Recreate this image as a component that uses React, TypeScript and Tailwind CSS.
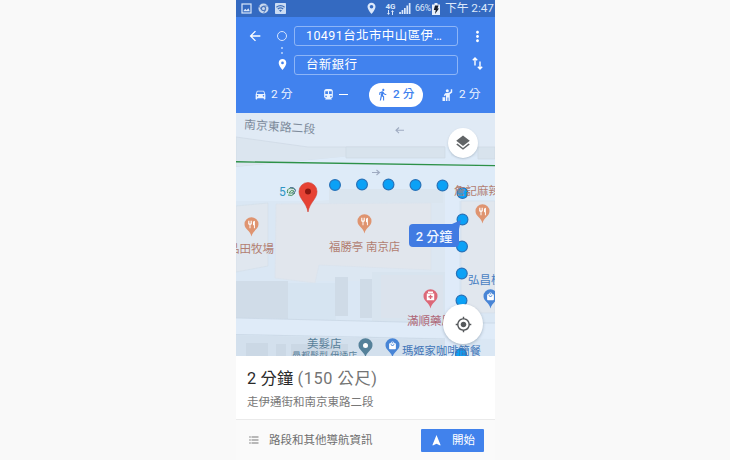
import React from "react";
import {
  MdArrowBack, MdDirectionsCar, MdDirectionsTransit, MdDirectionsWalk, MdHail, MdLayers,
  MdGpsFixed, MdNavigation, MdMoreVert, MdPlace, MdFormatListBulleted, MdRestaurant, MdLocalMall,
} from "react-icons/md";

const DOTS: [number, number][] = [
  [99, 72], [126, 71.5], [152.5, 71.5], [179.5, 72], [206.5, 72.5], [226.5, 80],
  [226.5, 106.5], [226, 133.5], [225.8, 160.5], [225.5, 187.5], [225, 214], [225, 241],
];

function StatusBar() {
  return (
    <div className="flex h-[17px] shrink-0 items-center bg-[#346ac1] pl-[5px] pr-[4px] text-[#dbe8fb]">
      <svg className="h-[11px] w-[11px]" viewBox="0 0 11 11">
        <rect x="1" y="1" width="9" height="9" fill="none" stroke="currentColor" strokeWidth="1.2" />
        <path d="M2.2 8.3l2-2.5 1.5 1.4 1.6-2 1.6 3.1z" fill="currentColor" />
      </svg>
      <svg className="ml-[6px] h-[11px] w-[11px]" viewBox="0 0 11 11">
        <circle cx="5.5" cy="5.5" r="5" fill="#c8d8ee" />
        <path d="M5.5 3H10M3.3 6.6L1.1 3M7.6 6.8L5.4 10.4" stroke="#5f86c4" strokeWidth=".9" />
        <circle cx="5.5" cy="5.5" r="2.1" fill="#c8d8ee" stroke="#4c77bd" strokeWidth="1.2" />
      </svg>
      <svg className="ml-[6px] h-[11px] w-[11px]" viewBox="0 0 11 11">
        <rect width="11" height="11" rx=".8" fill="#cbdcf3" />
        <path d="M1.4 4.2Q5.5 1 9.6 4.2M2.8 6Q5.5 3.8 8.2 6" fill="none" stroke="#3e6fb9" strokeWidth="1.2" />
        <path d="M4 7.3Q5.5 6.2 7 7.3L5.5 9z" fill="#3e6fb9" />
      </svg>
      <svg className="ml-auto h-[13px] w-[9px]" viewBox="0 0 9 13">
        <path fillRule="evenodd" fill="currentColor" d="M4.5.7A4 4 0 0 0 .5 4.8C.5 7.6 4.5 12 4.5 12S8.500 7.600 8.500 4.800A4 4 0 0 0 4.500.7zm0 2.300a1.800 1.800 0 1 1 0 3.600 1.800 1.800 0 0 1 0-3.600z" />
      </svg>
      <div className="ml-[9px] flex w-[11px] flex-col items-center">
        <span className="text-[8px] font-bold leading-[7px]">4G</span>
        <svg className="h-[5px] w-[7px]" viewBox="0 0 7 5">
          <path d="M0 3h1V0h1v3h1L1.500 5zM4 2h1v3h1V2h1L5.500 0z" fill="currentColor" />
        </svg>
      </div>
      <svg className="ml-[3px] h-[11px] w-[12px]" viewBox="0 0 12 11">
        <path d="M.2 9h1.700v2H.2zM2.600 7h1.700v4H2.600zM5 5h1.700v6H5zM7.400 2.500h1.700V11H7.400zM9.800 0h1.700v11H9.800z" fill="currentColor" />
      </svg>
      <span className="ml-[4px] w-[16px] whitespace-nowrap text-[9px] leading-none tracking-[-.3px]">66%</span>
      <svg className="ml-[1px] h-[12px] w-[8px]" viewBox="0 0 8 12">
        <path d="M2.500 0h3v1.500H8V12H0V1.500h2.500z" fill="#e8effa" />
        <path d="M3 2.500h3.500L5.500 5.500H7L3 11l.7-4H1.800z" fill="#151c29" />
      </svg>
      <span className="ml-[5px] w-[46px] whitespace-nowrap pt-px text-[11.800px] leading-none tracking-[-.05px]">下午 2:47</span>
    </div>
  );
}

function Field({ children }: { children: React.ReactNode }) {
  return (
    <div className="flex w-[164px] items-center whitespace-nowrap rounded-[3px] border border-[#8db5f7] pl-[11px] pt-px text-[12.500px] leading-none text-white">
      {children}
    </div>
  );
}

function Header() {
  return (
    <header className="flex h-[96px] shrink-0 flex-col bg-[#4182ee] text-white">
      <div className="flex h-[63px] pt-[9px]">
        <MdArrowBack className="ml-[11px] mt-[2px] h-[16px] w-[16px]" />
        <div className="ml-[13px] flex w-[12px] flex-col items-center">
          <span className="mt-[5px] h-[10px] w-[10px] shrink-0 rounded-full border border-[#d5e4fd]" />
          <span className="mt-[6px] h-[2px] w-[2px] rounded-full bg-[#bdd5fc]" />
          <span className="mt-[3px] h-[2px] w-[2px] rounded-full bg-[#bdd5fc]" />
          <MdPlace className="mt-[4px] h-[13px] w-[13px] shrink-0" />
        </div>
        <div className="ml-[6px] grid h-[49px] grid-rows-[20px_20px] gap-[9px]">
          <Field><span className="tracking-[.4px]">10491台北市中山區伊…</span></Field>
          <Field><span className="tracking-[.3px]">台新銀行</span></Field>
        </div>
        <div className="ml-[11px] flex w-[16px] flex-col items-center">
          <MdMoreVert className="mt-[2px] h-[17px] w-[17px] shrink-0" />
          <svg className="mt-[12px] h-[13px] w-[11px]" viewBox="0 0 11 13">
            <path d="M3 8.500V1M.8 3.200L3 1l2.200 2.200M8 4.500V12M5.800 9.800L8 12l2.200-2.200" fill="none" stroke="currentColor" strokeWidth="1.400" />
          </svg>
        </div>
      </div>
      <div className="flex h-[24px] items-center pl-[18px] pt-[5px] text-[11.800px] leading-none text-[#edf4ff]">
        <div className="flex w-[68px] items-center gap-[4px]">
          <MdDirectionsCar className="h-[13px] w-[13px]" /><span className="whitespace-nowrap pt-px tracking-[.15px]">2 分</span>
        </div>
        <div className="flex w-[47px] items-center gap-[4px]">
          <MdDirectionsTransit className="h-[13px] w-[13px]" /><span className="h-[1.500px] w-[9px] bg-white" />
        </div>
        <div className="flex h-[24px] w-[54px] items-center gap-[4px] rounded-full bg-white pl-[7px] text-[#4182ee]">
          <MdDirectionsWalk className="h-[13px] w-[13px]" /><span className="whitespace-nowrap pt-px font-medium">2 分</span>
        </div>
        <div className="ml-[18px] flex items-center gap-[4px]">
          <svg className="h-[14px] w-[14px]" viewBox="0 0 14 14" fill="currentColor">
            <circle cx="6.300" cy="2.800" r="1.500" />
            <path d="M4.200 5.200L8 4.800 9.800 3.600V1.200h1.400v3.200L8.800 6.200V13H7.500V9.500H6.400V13H5V7L3.800 8.300 2.800 7.300z" />
            <path d="M1.500 9.200h2.700V13H1.500z" />
          </svg>
          <span className="whitespace-nowrap pt-px tracking-[.15px]">2 分</span>
        </div>
      </div>
    </header>
  );
}

function Pin({ place, fill, children }: { place: string; fill: string; children?: React.ReactNode }) {
  return (
    <div className={"absolute flex h-[20px] w-[15px] justify-center pt-[3px] text-white " + place}>
      <svg className="absolute inset-0 h-full w-full" viewBox="0 0 15 20">
        <path d="M7.500.3A7 7 0 0 0 .5 7.300C.5 12.200 6.300 13.500 7.500 19.500 8.700 13.500 14.500 12.200 14.500 7.300A7 7 0 0 0 7.500.3z" fill={fill} />
      </svg>
      <div className="relative">{children}</div>
    </div>
  );
}

function MapView() {
  const label = "absolute whitespace-nowrap leading-none ";
  return (
    <main className="relative h-[243px] shrink-0 overflow-hidden bg-[#dae7f4]">
      <svg className="absolute inset-0 h-full w-full" viewBox="0 0 259 243">
        <path d="M0 0H259V34H72L0 24z" fill="#e0eaf5" />
        <path d="M0 24L72 34H209V44H110L0 54z" fill="#dbe5ef" stroke="#ced9e4" strokeWidth=".7" />
        <path d="M209 34H215V46H209zM0 54L110 43.500H259V88H0z" fill="#deebf8" />
        <path d="M110 34H209V45H110zM242 34H259V46H242z" fill="#d8e3ed" stroke="#ced9e4" strokeWidth=".7" />
        <path d="M0 93L32 90V153L0 159z" fill="#e0e7ef" stroke="#d4dfea" strokeWidth=".7" />
        <path d="M40 91L93 87V76H209V168H83L79 170 39 166z" fill="#dce7f2" />
        <path d="M93 76H207V90H93z" fill="#dae5ef" />
        <path d="M40 91L195 90V157L83 152 79 170 39 165z" fill="#e1e6ed" stroke="#dae3ec" strokeWidth=".7" />
        <path d="M0 168H52V206L0 205z" fill="#d0dce8" />
        <path d="M52 170H100V207H52z" fill="#d6e4f1" />
        <path d="M99 164H112V203H99zM124 166H136V205H124z" fill="#cfdbe7" />
        <path d="M136 159H209V210H136z" fill="#d8e4ef" />
        <path d="M145 162H207V205H145z" fill="#dbe3ed" />
        <path d="M209 76H223V243H209z" fill="#dfebf9" />
        <path d="M225 88H259V200H225z" fill="#e1e7ee" stroke="#d2deea" strokeWidth=".7" />
        <path d="M0 205L209 210H259V226L0 221z" fill="#dfebf8" />
        <path d="M0 205L207 210M0 221.500L209 226M225 210H259" fill="none" stroke="#c9d7e5" strokeWidth=".8" />
        <path d="M0 222L209 227V243H0z" fill="#d3e0ed" />
        <path d="M10 230H32V243H10zM40 231H50V243H40zM55 231H112V243H55z" fill="#cbd8e5" />
        <path d="M0 48.800L259 52.600" stroke="#2d9148" strokeWidth="1.400" />
        <path d="M168 17.300H160M163 14.500l-3 2.800 3 2.800M136 59.500h7M140.500 57l3 2.500-3 2.500" fill="none" stroke="#9fabc1" strokeWidth="1.100" />
        {DOTS.map(([x, y]) => (
          <circle key={x + "-" + y} cx={x} cy={y} r="5.400" fill="#0ba1f6" stroke="#2872b8" strokeWidth="1.200" />
        ))}
        <circle cx="55" cy="78.500" r="4" fill="#d5e5e4" />
        <path d="M51.500 80q-1-4 3-5 4 0 4.800 2M53 80q2-4 5-2-1 3-5 2M52 82q4 2 7-2" fill="none" stroke="#4d9464" strokeWidth="1" />
        <path d="M54 74.800q4-1 5.500 2.500-.5 3-3 3.500" fill="none" stroke="#41658e" strokeWidth="1" />
        <path d="M72 69.500a9 9 0 0 0-9 9C63 86 70.500 89.500 72 99c1.500-9.500 9-13 9-20.500a9 9 0 0 0-9-9z" fill="#e64234" stroke="#d23a2e" strokeWidth=".6" />
        <circle cx="72" cy="78.500" r="3" fill="#8c1710" />
      </svg>
      <span className={label + "left-[8px] top-[9px] rotate-[4deg] text-[11.900px] text-[#7d8b9b]"}>南京東路二段</span>
      <span className={label + "left-[43px] top-[73px] text-[12px] text-[#2f95c4]"}>5</span>
      <Pin place="left-[8px] top-[104px]" fill="#df9470"><MdRestaurant className="h-[9px] w-[9px]" /></Pin>
      <span className={label + "left-[-8px] top-[131px] text-[11.500px] text-[#b27e71]"}>品田牧場</span>
      <Pin place="left-[121px] top-[101px]" fill="#df9470"><MdRestaurant className="h-[9px] w-[9px]" /></Pin>
      <span className={label + "left-[93px] top-[129px] text-[11.400px] text-[#b27e71]"}>福勝亭 南京店</span>
      <span className={label + "left-[218px] top-[73px] text-[11.500px] text-[#b27e71]"}>詹記麻辣</span>
      <Pin place="left-[239px] top-[91px]" fill="#df9470"><MdRestaurant className="h-[9px] w-[9px]" /></Pin>
      <span className={label + "left-[232px] top-[162px] text-[11.500px] text-[#4a7fc2]"}>弘昌模</span>
      <Pin place="left-[247px] top-[176px]" fill="#4885d6"><MdLocalMall className="h-[9px] w-[9px]" /></Pin>
      <Pin place="left-[187px] top-[176px]" fill="#dc6878">
        <svg className="mt-[-1px] h-[10px] w-[9px]" viewBox="0 0 9 10">
          <path d="M2 .5h5V2H2zM.8 2.500h7.400v6.700H.8z" fill="white" />
          <path d="M4.500 3.700v4.200M2.400 5.800h4.200" stroke="#dc6878" strokeWidth="1.400" />
        </svg>
      </Pin>
      <span className={label + "left-[171px] top-[203px] text-[11.500px] text-[#af6777]"}>滿順藥局</span>
      <span className={label + "left-[71px] top-[226px] text-[11.500px] text-[#587f99]"}>美髮店</span>
      <span className={label + "left-[56px] top-[239px] text-[9px] text-[#587f99]"}>曼都髮型 伊通店</span>
      <Pin place="left-[122px] top-[225px]" fill="#55819a"><span className="mt-[2px] block h-[5px] w-[5px] rounded-full bg-white" /></Pin>
      <Pin place="left-[149px] top-[225px]" fill="#4885d6"><MdLocalMall className="h-[9px] w-[9px]" /></Pin>
      <span className={label + "left-[166px] top-[233px] text-[11.300px] text-[#4276b8]"}>瑪姬家咖啡簡餐</span>
      <div className="absolute left-[173px] top-[111px] flex h-[23px] w-[50px] items-center justify-center whitespace-nowrap rounded-[4px] bg-[#417be2] pt-px text-[13px] font-medium leading-none text-[#f1f6ff]">
        2 分鐘
        <svg className="absolute right-[-2px] top-[-4px] h-[9px] w-[9px]" viewBox="0 0 9 9"><path d="M9 0L7 9 0 4z" fill="#417be2" /></svg>
      </div>
      <button className="absolute left-[212px] top-[15px] flex h-[30px] w-[30px] items-center justify-center rounded-full bg-white text-[#626567] shadow-[0_1px_2px_rgba(60,80,100,0.25)]">
        <MdLayers className="h-[18px] w-[18px]" />
      </button>
      <button className="absolute left-[207px] top-[191px] flex h-[40px] w-[40px] items-center justify-center rounded-full bg-white text-[#55585b] shadow-[0_1px_3px_rgba(60,80,100,0.35)]">
        <MdGpsFixed className="h-[17px] w-[17px]" />
      </button>
    </main>
  );
}

export default function App() {
  return (
    <div className="flex h-[460px] w-[730px] justify-center overflow-hidden bg-[#f9f9f9] pl-px font-[Roboto,'Noto_Sans_CJK_TC',sans-serif]">
      <div className="flex w-[259px] flex-col overflow-hidden bg-white">
        <StatusBar />
        <Header />
        <MapView />
        <section className="flex h-[63px] flex-col whitespace-nowrap bg-white pl-[11px] pt-[14px]">
          <h1 className="text-[16.300px] leading-[18px] tracking-[.15px] text-[#2a2a2a]">2 分鐘 <span className="tracking-[.6px] text-[#747474]">(150 公尺)</span></h1>
          <p className="mt-[8px] text-[11.500px] leading-[13px] text-[#777]">走伊通街和南京東路二段</p>
        </section>
        <footer className="flex h-[41px] items-center border-t border-[#eaeaea] bg-[#fafafa] pl-[12px] pr-[11px]">
          <MdFormatListBulleted className="h-[12px] w-[12px] text-[#777]" />
          <span className="ml-[9px] whitespace-nowrap pt-[2px] text-[11.500px] leading-none text-[#6f6f6f]">路段和其他導航資訊</span>
          <button className="ml-auto flex h-[23px] w-[63px] items-center rounded-[1px] bg-[#4182ec] pl-[9px] text-white">
            <MdNavigation className="h-[13px] w-[13px]" />
            <span className="ml-[9px] whitespace-nowrap pt-[2px] text-[11.500px] leading-none">開始</span>
          </button>
        </footer>
      </div>
    </div>
  );
}
